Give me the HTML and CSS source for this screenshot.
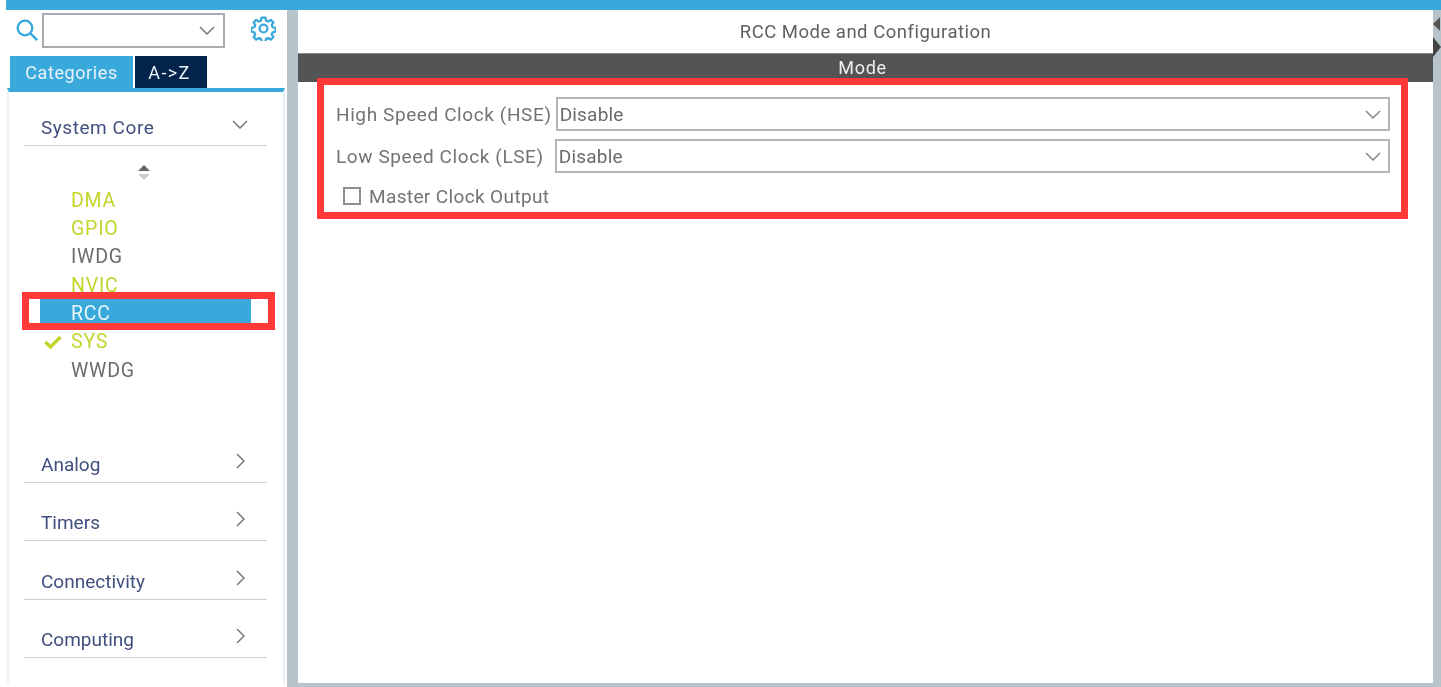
FILE: index.html
```html
<!DOCTYPE html>
<html lang="en">
<head>
<meta charset="utf-8">
<title>RCC Mode and Configuration</title>
<link rel="stylesheet" href="styles.css">
</head>
<body>
<div class="app">
  <div class="topbar"></div>
  <div class="workspace">
    <aside class="sidebar">
      <div class="search-row">
        <svg class="icon-search" viewBox="0 0 22 22" width="22" height="22"><circle cx="9" cy="9" r="7.300" fill="none" stroke="#39a9dc" stroke-width="2.300"/><path d="M14.200 14.200l7 7" stroke="#39a9dc" stroke-width="2.500" fill="none"/></svg>
        <div class="search-box">
          <svg class="chev-down" viewBox="0 0 16 9" width="16" height="9"><path d="M1 1l7 7 7-7" fill="none" stroke="#777" stroke-width="1.500"/></svg>
        </div>
        <svg class="icon-gear" viewBox="0 0 24 24" width="25" height="25"><path d="M10.200 1.500h3.600l.6 2.900 2.100.9 2.500-1.600 2.500 2.500-1.600 2.500.9 2.100 2.900.6v3.600l-2.900.6-.9 2.100 1.600 2.500-2.500 2.500-2.500-1.600-2.100.9-.6 2.900h-3.600l-.6-2.900-2.100-.9-2.500 1.600-2.500-2.500 1.600-2.500-.9-2.100-2.900-.6v-3.600l2.900-.6.9-2.100-1.600-2.500 2.500-2.500 2.500 1.600 2.100-.9z" fill="none" stroke="#39a9dc" stroke-width="2.200" stroke-linejoin="round"/><circle cx="12" cy="12" r="3.800" fill="none" stroke="#39a9dc" stroke-width="2.200"/></svg>
      </div>
      <div class="tabs">
        <div class="tab tab-active">Categories</div>
        <div class="tab tab-dark">A-&gt;Z</div>
      </div>
      <div class="panel">
        <section class="cat cat-open">
          <span class="cat-name">System Core</span>
          <svg class="chev-down cat-chev" viewBox="0 0 16 9" width="16" height="9"><path d="M1 1l7 7 7-7" fill="none" stroke="#777" stroke-width="1.500"/></svg>
        </section>
        <div class="list-area">
          <svg class="sorter" viewBox="0 0 12 15" width="12" height="15"><path d="M6 0l6 6H0z" fill="#666"/><path d="M6 15l6-6H0z" fill="#ccc"/></svg>
          <ul class="items">
            <li class="item ok">DMA</li>
            <li class="item ok">GPIO</li>
            <li class="item">IWDG</li>
            <li class="item ok">NVIC</li>
            <li class="item selected">RCC</li>
            <li class="item ok"><svg class="check" viewBox="0 0 18 14" width="18" height="14"><path d="M1.500 7l5 5L16.500 2" fill="none" stroke="#c3d52c" stroke-width="3.500"/></svg>SYS</li>
            <li class="item">WWDG</li>
          </ul>
        </div>
        <section class="cat"><span class="cat-name">Analog</span><svg class="chev-right" viewBox="0 0 9 16" width="9" height="16"><path d="M1 1l7 7-7 7" fill="none" stroke="#777" stroke-width="1.500"/></svg></section>
        <section class="cat"><span class="cat-name">Timers</span><svg class="chev-right" viewBox="0 0 9 16" width="9" height="16"><path d="M1 1l7 7-7 7" fill="none" stroke="#777" stroke-width="1.500"/></svg></section>
        <section class="cat"><span class="cat-name">Connectivity</span><svg class="chev-right" viewBox="0 0 9 16" width="9" height="16"><path d="M1 1l7 7-7 7" fill="none" stroke="#777" stroke-width="1.500"/></svg></section>
        <section class="cat"><span class="cat-name">Computing</span><svg class="chev-right" viewBox="0 0 9 16" width="9" height="16"><path d="M1 1l7 7-7 7" fill="none" stroke="#777" stroke-width="1.500"/></svg></section>
        <section class="cat cat-clipped"><svg class="chev-right" viewBox="0 0 9 16" width="9" height="16"><path d="M1 1l7 7-7 7" fill="none" stroke="#777" stroke-width="1.500"/></svg></section>
      </div>
      <div class="mark mark-rcc"></div>
    </aside>
    <main class="main">
      <h1 class="title">RCC Mode and Configuration</h1>
      <div class="mode-bar">Mode</div>
      <div class="form">
        <div class="row row-hse">
          <label class="lbl">High Speed Clock (HSE)</label>
          <div class="select"><span>Disable</span><svg class="chev-down" viewBox="0 0 16 9" width="16" height="9"><path d="M1 1l7 7 7-7" fill="none" stroke="#888" stroke-width="1.500"/></svg></div>
        </div>
        <div class="row row-lse">
          <label class="lbl">Low Speed Clock (LSE)</label>
          <div class="select"><span>Disable</span><svg class="chev-down" viewBox="0 0 16 9" width="16" height="9"><path d="M1 1l7 7 7-7" fill="none" stroke="#888" stroke-width="1.500"/></svg></div>
        </div>
        <div class="check-row"><span class="box"></span><span class="lbl lbl-check">Master Clock Output</span></div>
      </div>
      <div class="mark mark-mode"></div>
    </main>
    <div class="gutter-right">
      <svg class="tri" viewBox="0 0 8 14" width="8" height="14"><path d="M7 0v14L0 7z" fill="#555"/></svg>
      <svg class="tri tri-2" viewBox="0 0 8 20" width="8" height="20"><path d="M0 0l8 10-8 10z" fill="#444"/></svg>
    </div>
  </div>
</div>
</body>
</html>
```
FILE: styles.css
```css
* { box-sizing: border-box; }
html, body { margin: 0; padding: 0; background: #fff; }
body { font-family: Roboto, "Liberation Sans", sans-serif; overflow: hidden; }
.app { width: 1441px; height: 687px; display: flex; flex-direction: column; overflow: hidden; background: #fff; filter: blur(.4px); }
.topbar { height: 10px; margin-left: 6px; background: #39a9dc; flex: none; }
.workspace { flex: 1; display: flex; min-height: 0; margin-left: 6px; background: #b8c4cb; padding-bottom: 4px; position: relative; }

.sidebar { width: 281px; flex: none; background: #fff; position: relative; margin-bottom: -4px; padding-top: 3px; }
.search-row { height: 35px; display: flex; align-items: center; position: relative; }
.icon-search { margin-left: 10px; margin-top: -1px; flex: none; }
.search-box { margin-left: 4px; width: 183px; height: 35px; border: 2px solid #a9adb2; display: flex; align-items: center; justify-content: flex-end; padding-right: 8px; }
.icon-gear { margin-left: 26px; margin-top: -4px; flex: none; }
.tabs { display: flex; margin-top: 8px; margin-left: 4px; height: 32px; }
.tab { height: 32px; color: #e8f2f8; font-size: 18px; display: flex; align-items: center; justify-content: center; }
.tab-active { width: 123px; margin-left: 0; background: #39a9dc; letter-spacing: .6px; }
.tab-dark { width: 72px; margin-left: 2px; background: #03234b; letter-spacing: 1.400px; padding-right: 3px; }
.panel { margin: 0 2px 0 1px; border-top: 4px solid #39a9dc; border-left: 2px solid #eef2f4; border-right: 2px solid #e9eef0; height: 595px; position: relative; overflow: hidden; }
.cat { height: 58.5px; margin: 0 16px 0 15px; border-bottom: 1.500px solid #c9d2d8; display: flex; align-items: flex-end; justify-content: space-between; padding: 0 20px 4px 17px; position: relative; }
.cat-open { height: 54px; }
.cat-name { font-size: 19px; color: #414f7f; letter-spacing: 0; line-height: 24px; position: relative; top: -1px; }
.cat-open .cat-name { letter-spacing: .55px; }
.cat-chev { margin-bottom: 12px; margin-right: -1px; }
.chev-right { margin-bottom: 9px; margin-right: 2px; }
.cat-clipped { justify-content: flex-end; height: 50px; border-bottom: 0; padding-bottom: 0; }
.cat-clipped .chev-right { margin-bottom: -8px; }
.list-area { height: 278px; position: relative; padding-top: 19px; }
.sorter { display: block; margin-left: 129px; }
.items { list-style: none; margin: 0; padding: 0; margin-top: 6.500px; }
.item { height: 28.4px; line-height: 28.4px; font-size: 19.500px; letter-spacing: .8px; color: #6b6b6d; padding-left: 62px; position: relative; margin-left: 0; }
.ok { color: #c3d52c; }
.selected { background: #39a9dc; color: #eaf5fb; margin: -1.500px 32px 5.900px 31px; padding-left: 31px; height: 24px; line-height: 29px; }
.check { position: absolute; left: 35px; top: 7px; }

.mark { position: absolute; border: 7px solid #ff3838; pointer-events: none; }
.mark-rcc { left: 16px; top: 282px; width: 253px; height: 38px; }
.mark-mode { left: 19px; top: 68px; width: 1091px; height: 141px; }

.main { margin-left: 11px; width: 1135px; flex: none; background: #fff; position: relative; }
.title { margin: 0; height: 43px; font-size: 18.500px; font-weight: 400; color: #5f6062; letter-spacing: .5px; text-align: center; line-height: 44px; }
.mode-bar { height: 29px; background: #535554; border-top: 1px solid #888; color: #eee; font-size: 18px; letter-spacing: .7px; text-align: center; line-height: 27px; padding-right: 6px; }
.form { padding: 15px 43px 0 38px; }
.row { display: flex; align-items: center; height: 34px; }
.row-lse { margin-top: 8px; }
.lbl { font-size: 19px; color: #727375; letter-spacing: .6px; white-space: nowrap; }
.lbl-check { letter-spacing: .37px; }
.select { flex: 1; height: 34px; border: 2px solid #b1b5ba; font-size: 19px; color: #6a6b6d; letter-spacing: .2px; display: flex; align-items: center; justify-content: space-between; padding: 0 7px 0 2px; }
.row-hse .select { margin-left: 4px; }
.row-lse .select { margin-left: 11px; }
.check-row { display: flex; align-items: center; margin-top: 7px; margin-left: 7px; height: 32px; }
.box { width: 18px; height: 18px; border: 2px solid #8b8d90; margin-right: 8px; flex: none; }

.gutter-right { flex: 1; position: relative; display: flex; flex-direction: column; align-items: flex-end; padding-top: 7px; }
.tri-2 { margin-top: 6px; }
```
